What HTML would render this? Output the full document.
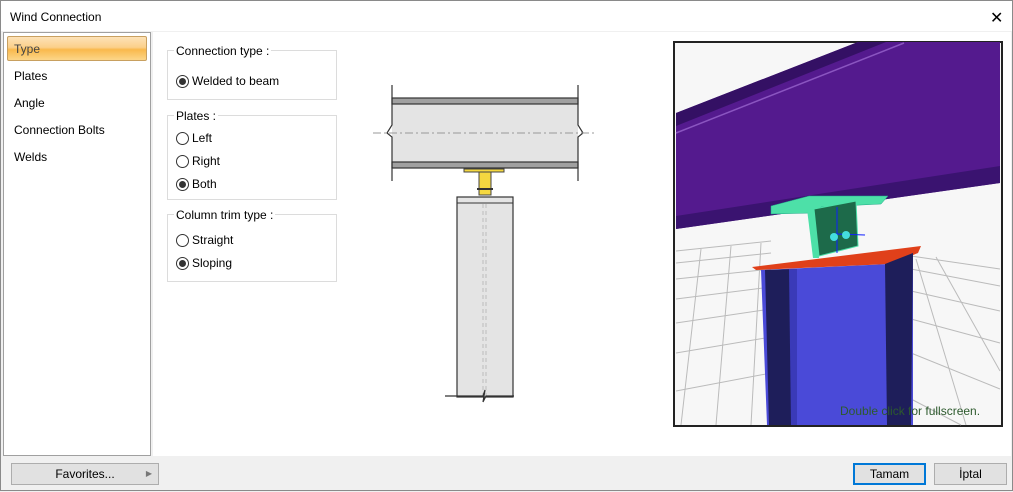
<!DOCTYPE html>
<html><head><meta charset="utf-8"><style>
*{margin:0;padding:0;box-sizing:border-box}
body{width:1013px;height:491px;background:#f0f0f0;font-family:"Liberation Sans",sans-serif;font-size:12px;color:#000;position:relative;overflow:hidden}
.win{position:absolute;left:0;top:0;width:1013px;height:491px;border:1px solid #8a8a8a;background:#f0f0f0}
.title{position:absolute;left:0;top:0;width:1011px;height:30px;background:#fff}
.title span{position:absolute;left:9px;top:9px;font-size:12px}
.x{position:absolute;left:989px;top:7px;font-size:16px}
.left{position:absolute;left:2px;top:31px;width:148px;height:424px;background:#fff;border:1px solid #a0a0a0}
.item{position:absolute;left:10px;font-size:12px}
.sel{position:absolute;left:3px;top:3px;width:140px;height:25px;border:1px solid #c8a060;border-radius:2px;background:linear-gradient(#fde2b8,#fbd08a 45%,#f9b94c 55%,#fcd689);}
.main{position:absolute;left:152px;top:31px;width:858px;height:424px;background:#fff}
.grp{position:absolute;left:166px;width:170px;border:1px solid #dcdcdc}
.grp .lb{position:absolute;left:6px;top:-7px;background:#fff;padding:0 2px}
.r{position:absolute;left:8px;display:flex;align-items:center}
.rb{width:13px;height:13px;border:1px solid #333;border-radius:50%;background:#fff;margin-right:3px;position:relative}
.rb.on::after{content:"";position:absolute;left:2px;top:2px;width:7px;height:7px;border-radius:50%;background:#333}
.btn{position:absolute;top:462px;height:22px;border:1px solid #adadad;background:#e1e1e1;text-align:center;line-height:20px;font-size:12px}
</style></head><body><div class="win">
<div class="title"><span>Wind Connection</span><div class="x">✕</div></div>
<div class="left">
<div class="sel"></div>
<div class="item" style="top:9px;color:#444">Type</div>
<div class="item" style="top:36px">Plates</div>
<div class="item" style="top:63px">Angle</div>
<div class="item" style="top:90px">Connection Bolts</div>
<div class="item" style="top:117px">Welds</div>
</div>
<div class="main"></div>
<div class="grp" style="top:49px;height:50px"><div class="lb">Connection type :</div>
<div class="r" style="top:23px"><div class="rb on"></div>Welded to beam</div></div>
<div class="grp" style="top:114px;height:85px"><div class="lb">Plates :</div>
<div class="r" style="top:15px"><div class="rb"></div>Left</div>
<div class="r" style="top:38px"><div class="rb"></div>Right</div>
<div class="r" style="top:61px"><div class="rb on"></div>Both</div></div>
<div class="grp" style="top:213px;height:68px"><div class="lb">Column trim type :</div>
<div class="r" style="top:18px"><div class="rb"></div>Straight</div>
<div class="r" style="top:41px"><div class="rb on"></div>Sloping</div></div>

<svg style="position:absolute;left:0;top:0" width="1013" height="491">
<rect x="391" y="97" width="186" height="70" fill="#e4e4e4"/>
<rect x="391" y="97" width="186" height="6" fill="#a0a0a0" stroke="#333" stroke-width="1.2"/>
<rect x="391" y="161" width="186" height="6" fill="#a0a0a0" stroke="#333" stroke-width="1.2"/>
<path d="M391 84V124l-5 8 5 4V180M577 84V124l5 8-5 4V180" fill="none" stroke="#333" stroke-width="1.2"/>
<line x1="372" y1="132" x2="596" y2="132" stroke="#999" stroke-dasharray="8,3,2,3"/>
<path d="M463 168h40v3h-17v14h-6v-14h-17z" fill="#f5d840" stroke="#444"/>
<rect x="478" y="171" width="12" height="23" fill="#f5d840" stroke="#444"/>
<line x1="476" y1="188" x2="492" y2="188" stroke="#333" stroke-width="2"/>
<rect x="456" y="196" width="56" height="200" fill="#e4e4e4" stroke="#333" stroke-width="1.2"/>
<line x1="456" y1="202" x2="512" y2="202" stroke="#333"/>
<path d="M482 203V395M485 203V395" stroke="#bbb" stroke-dasharray="4,3"/>
<path d="M444 395h38l2-6-2 12 3-6h28" fill="none" stroke="#333" stroke-width="1.2"/>
<g>
<rect x="673" y="41" width="328" height="384" fill="#f7f7f7" stroke="#222" stroke-width="2"/>
<g stroke="#bbb" fill="none">
<path d="M675 250L770 240M675 262L770 252M675 278L770 268M675 298L770 286M675 322L770 308M675 352L770 336M675 390L770 372"/>
<path d="M700 248L680 424M730 245L715 424M760 242L750 424"/>
<path d="M910 255L999 268M910 268L999 285M910 290L999 310M910 318L999 342M910 352L999 388M910 398L960 424"/>
<path d="M915 258L965 424M935 256L999 370"/>
</g>
<path d="M675 112L857 41L999 41L999 182L675 228Z" fill="#541a8e"/>
<path d="M675 112L857 41L885 41L675 125Z" fill="#341064"/>
<path d="M675 132L903 42" stroke="#8a55c0" stroke-width="1.5"/>
<path d="M675 215L999 165L999 182L675 228Z" fill="#3a1370"/>
<path d="M770 205L808 195L887 195L880 203L820 206L812 212L770 213Z" fill="#4de0a8" stroke="#2a8" stroke-width=".5"/>
<path d="M813 208L855 200L857 245L818 255Z" fill="#1d6a4a" stroke="#4de0a8"/>
<path d="M806 208L813 208L818 257L812 257Z" fill="#4de0a8"/>
<line x1="836" y1="206" x2="836" y2="252" stroke="#1020ff"/>
<line x1="835" y1="233" x2="864" y2="234" stroke="#1020ff"/>
<circle cx="833" cy="236" r="4" fill="#4dd"/><circle cx="845" cy="234" r="4" fill="#4dd"/>
<path d="M751 266L920 245L917 252L890 263L755 269Z" fill="#e0401a"/>
<path d="M760 269L890 263L912 252L912 424L766 424Z" fill="#4a4ad8"/>
<path d="M764 269L792 268L792 424L768 424Z" fill="#1e1e5a"/>
<path d="M788 268L796 268L796 424L790 424Z" fill="#3a3ab8"/>
<path d="M884 263L912 252L910 424L886 424Z" fill="#1e1e5a"/>
<text x="839" y="414" font-size="12" fill="#2d5a2d" font-family="Liberation Sans">Double click for fullscreen.</text>
</g>
</svg>
<div class="btn" style="left:10px;width:148px">Favorites...<span style="position:absolute;right:6px;top:0;font-size:8px;color:#777">▶</span></div>
<div class="btn" style="left:852px;width:73px;border:2px solid #0078d7;line-height:18px">Tamam</div>
<div class="btn" style="left:933px;width:73px">İptal</div>
</div></body></html>
